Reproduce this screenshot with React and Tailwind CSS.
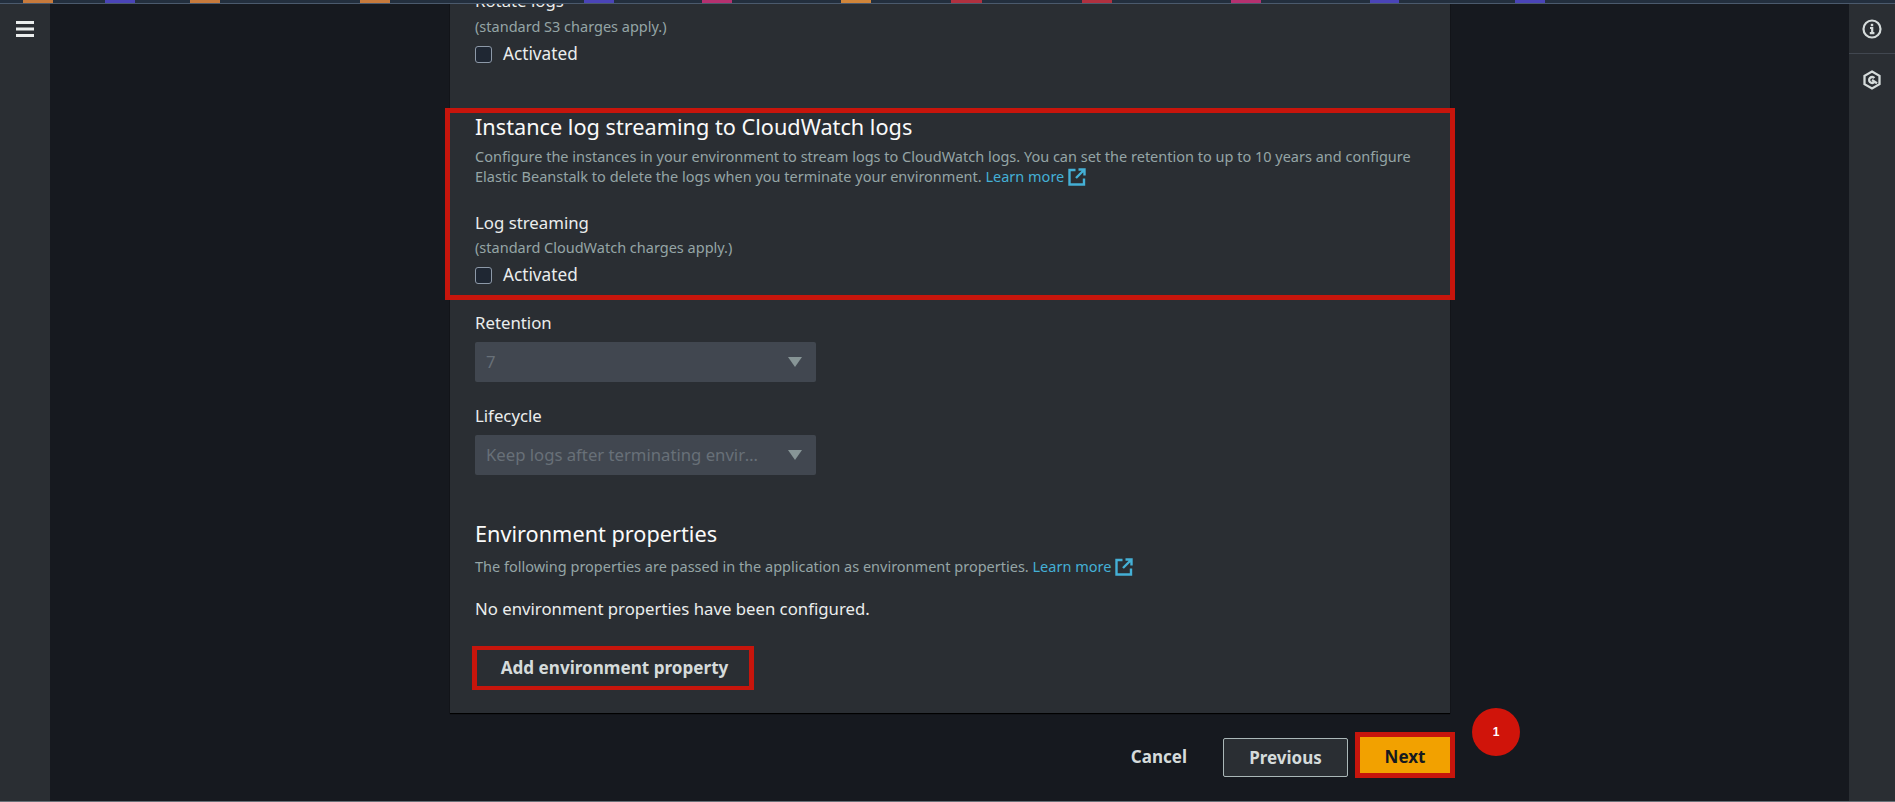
const font = "font-['Noto_Sans',sans-serif]";

// coloured tab stubs along the top edge of the window
const tabs = [
  "ml-[23px] w-[30px] bg-[#c77a3c]",
  "ml-[52px] w-[30px] bg-[#4a44b8]",
  "ml-[55px] w-[30px] bg-[#c77a3c]",
  "ml-[140px] w-[30px] bg-[#c77a3c]",
  "ml-[194px] w-[30px] bg-[#4a44b8]",
  "ml-[88px] w-[30px] bg-[#b5306f]",
  "ml-[109px] w-[30px] bg-[#d0853a]",
  "ml-[80px] w-[31px] bg-[#b0303f]",
  "ml-[100px] w-[30px] bg-[#b0303f]",
  "ml-[119px] w-[30px] bg-[#b5306f]",
  "ml-[109px] w-[29px] bg-[#4a44b8]",
  "ml-[116px] w-[30px] bg-[#4a44b8]",
];

function Checkbox() {
  return (
    <label className="flex items-center h-[24px]">
      <span className="w-[17px] h-[17px] rounded-[3px] border border-[#8d99a8] bg-[#1f2733]" />
      <span className="ml-[11px] text-[17.2px] text-[#eaeded]">Activated</span>
    </label>
  );
}

function LearnMore() {
  return (
    <a className="text-[#44b0d6] whitespace-nowrap">
      Learn more
      <svg className="inline-block ml-[4px] -mt-[3px] w-[18px] h-[18px]" viewBox="0 0 18 18" fill="none" stroke="#44b0d6" strokeWidth="2.4">
        <path d="M7.5 2H1.5v14.5H16V10.5" />
        <path d="M10.5 1.5h6v6M16 2L8 10" />
      </svg>
    </a>
  );
}

function DisabledSelect({ label, value, className }) {
  return (
    <div className={className}>
      <div className="h-[24px] leading-[24px] text-[16.8px] text-[#eaeded]">{label}</div>
      <div className="mt-[7px] w-[341px] h-[40px] rounded-[2px] bg-[#414750] flex items-center pl-[11px] pr-[14px]">
        <span className="flex-1 truncate text-[16.7px] text-[#687078]">{value}</span>
        <svg className="ml-[24px] w-[14px] h-[10px]" viewBox="0 0 14 10">
          <path d="M0 0h14L7 10z" fill="#879596" />
        </svg>
      </div>
    </div>
  );
}

function InfoIcon() {
  return (
    <svg className="w-[20px] h-[20px]" viewBox="0 0 20 20" fill="none" stroke="#d5dbdb" strokeWidth="2.2">
      <circle cx="10" cy="10" r="8.5" />
      <path d="M8 9h2.2v5M7.8 14.2h4.6" />
      <path d="M10 4.8v2.4" strokeWidth="2.4" />
    </svg>
  );
}

function HexIcon() {
  return (
    <svg className="w-[20px] h-[20px]" viewBox="0 0 20 20" fill="none" stroke="#d5dbdb" strokeWidth="2.3">
      <path d="M10 1.5l7.5 4.3v8.4L10 18.5l-7.5-4.3V5.8z" />
      <path d="M12.4 8a3 3 0 1 0 0 4" />
      <path d="M10 10l5 3.2" />
    </svg>
  );
}

export default function App() {
  return (
    <div className={`h-screen w-full overflow-hidden flex flex-col bg-[#16191f] border-b border-[#687078] ${font}`}>
      <div className="h-[4px] shrink-0 bg-[#232f3e] border-b border-[#4b5a6d]">
        <div className="flex h-[3px]">
          {tabs.map((t, i) => (
            <div key={i} className={t} />
          ))}
        </div>
      </div>

      <div className="flex flex-1 min-h-0">
        <div className="w-[50px] shrink-0 bg-[#2a2e33] flex justify-center pt-[17px]">
          <svg className="w-[18px] h-[16px]" viewBox="0 0 18 16" fill="#eaeded">
            <rect width="18" height="3" y="0" />
            <rect width="18" height="3" y="6.5" />
            <rect width="18" height="3" y="13" />
          </svg>
        </div>

        <main className="flex-1 min-w-0 overflow-hidden">
          <div className="ml-[400px] w-[1000px]">
            <div className="-mt-[15px] h-[724px] bg-[#2a2e33] px-[25px] shadow-[0_1px_1px_#000]">
              <div className="h-[24px] leading-[24px] text-[16.8px] text-[#eaeded]">Rotate logs</div>
              <div className="h-[20px] leading-[20px] mt-[3px] text-[14.5px] text-[#95a5a6]">(standard S3 charges apply.)</div>
              <div className="mt-[6px]"><Checkbox /></div>

              <section className="mt-[47px] -mx-[25px] px-[25px] h-[182px] outline-[5px] outline-[#c7150c] relative">
                <h2 className="text-[21.7px] leading-[28px] text-[#fafafa]">Instance log streaming to CloudWatch logs</h2>
                <p className="mt-[5px] text-[14.5px] leading-[20px] text-[#95a5a6]">
                  Configure the instances in your environment to stream logs to CloudWatch logs. You can set the retention to up to 10 years and configure
                  <br />
                  Elastic Beanstalk to delete the logs when you terminate your environment. <LearnMore />
                </p>
                <div className="mt-[25px] h-[24px] leading-[24px] text-[16.8px] text-[#eaeded]">Log streaming</div>
                <div className="h-[20px] leading-[20px] mt-[2px] text-[14.5px] text-[#95a5a6]">(standard CloudWatch charges apply.)</div>
                <div className="mt-[6px]"><Checkbox /></div>
              </section>

              <DisabledSelect label="Retention" value="7" className="mt-[16px]" />
              <DisabledSelect label="Lifecycle" value="Keep logs after terminating environment" className="mt-[22px]" />

              <h2 className="mt-[45px] text-[21.7px] leading-[28px] text-[#fafafa]">Environment properties</h2>
              <p className="mt-[8px] text-[14.5px] leading-[20px] text-[#95a5a6]">
                The following properties are passed in the application as environment properties. <LearnMore />
              </p>
              <p className="mt-[21px] text-[16.75px] leading-[24px] text-[#eaeded]">No environment properties have been configured.</p>
              <button className="mt-[25px] -ml-[3px] w-[282px] h-[44px] pl-[3px] border-x-[5px] border-y-[4px] border-[#c7150c] text-[17.1px] font-bold text-[#d5dbdb]">
                Add environment property
              </button>
            </div>

            <div className="mt-[19px] flex items-start justify-end relative">
              <span className="mt-[13px] leading-[24px] text-[17px] font-bold text-[#d5dbdb] mr-[36px]">Cancel</span>
              <button className="mt-[6px] w-[125px] h-[39px] rounded-[2px] border border-[#aab7b8] bg-[#2a2e33] text-[17px] font-bold text-[#d5dbdb]">
                Previous
              </button>
              <button className="ml-[7px] -mr-[5px] w-[100px] h-[46px] pt-[4px] border-[5px] border-[#c7150c] bg-[#f2a100] text-[17px] font-bold text-[#16191f]">
                Next
              </button>
              <span className="absolute -right-[70px] -top-[24px] w-[48px] h-[48px] rounded-full bg-[#d0140a] flex items-center justify-center text-[12px] font-bold text-white font-['Liberation_Sans',sans-serif]">
                1
              </span>
            </div>
          </div>
        </main>

        <div className="w-[46px] shrink-0 bg-[#2a2e33]">
          <div className="h-[50px] flex items-center justify-center border-b border-[#414750]"><InfoIcon /></div>
          <div className="h-[52px] flex items-center justify-center"><HexIcon /></div>
        </div>
      </div>
    </div>
  );
}
